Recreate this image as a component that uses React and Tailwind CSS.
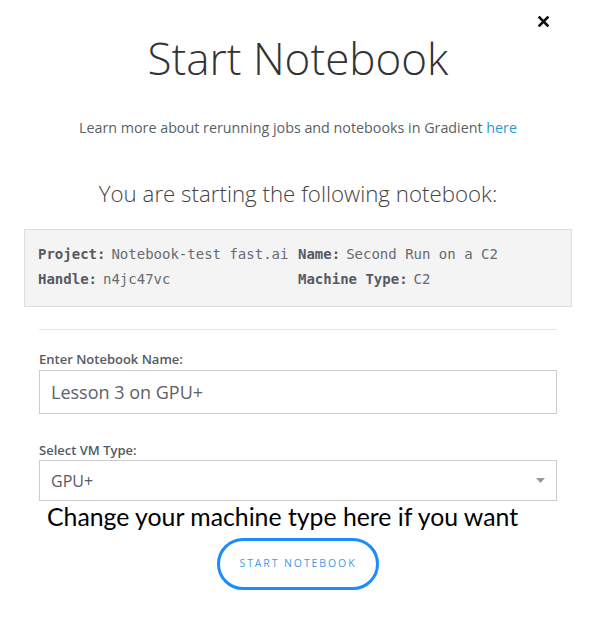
import React from "react";

const mono = { fontFamily: '"DejaVu Sans Mono", "Liberation Mono", monospace' };

function InfoRow({ label, value }) {
  return (
    <div className="h-[25px] flex items-center text-[14px] whitespace-nowrap">
      <span className="font-bold text-[#555a62]">{label}</span>
      <span className="ml-[6px] text-[#666b72]">{value}</span>
    </div>
  );
}

export default function App() {
  return (
    <main
      className="relative w-[596px] h-[629px] bg-white overflow-hidden"
      style={{ fontFamily: '"Open Sans", sans-serif' }}
    >
      {/* close button */}
      <button className="absolute top-[15px] right-[47px] w-[12px] h-[12px] flex items-center justify-center">
        <svg width="11" height="11" viewBox="0 0 11 11">
          <path d="M1.5 1.5 L9.5 9.5 M9.5 1.5 L1.5 9.5" stroke="#111" strokeWidth="2.6" strokeLinecap="square" />
        </svg>
      </button>

      <div className="flex flex-col items-center pt-[36px]">
        <h1 className="text-[44px] leading-[44px] font-light text-[#333]">Start Notebook</h1>

        <p className="mt-[38px] text-[14.3px] leading-[20px] text-[#5a5f66]">
          Learn more about rerunning jobs and notebooks in Gradient{" "}
          <a className="text-[#2a9ad6]">here</a>
        </p>

        <h2 className="mt-[42px] text-[22.3px] leading-[28px] font-light text-[#444]">
          You are starting the following notebook:
        </h2>
      </div>

      {/* notebook info */}
      <div className="mx-[24px] mt-[21px] h-[78px] bg-[#f4f4f4] border border-[#dddddd] px-[13px] pt-[12px]">
        <div className="grid grid-cols-2" style={mono}>
          <InfoRow label="Project:" value="Notebook-test fast.ai" />
          <InfoRow label="Name:" value="Second Run on a C2" />
          <InfoRow label="Handle:" value="n4jc47vc" />
          <InfoRow label="Machine Type:" value="C2" />
        </div>
      </div>

      <div className="mx-[39px] mt-[22px] border-t border-[#e6e6e6]" />

      {/* form */}
      <div className="mx-[39px] mt-[20px] flex flex-col">
        <label className="text-[13px] leading-[18px] font-semibold text-[#555a62]">Enter Notebook Name:</label>
        <div className="mt-[2px] h-[44px] border border-[#cccccc] flex items-center px-[11px] text-[18px] text-[#5d6168]">
          Lesson 3 on GPU+
        </div>

        <label className="mt-[27px] text-[13px] leading-[18px] font-semibold text-[#555a62]">Select VM Type:</label>
        <div className="mt-[1px] h-[41px] border border-[#cccccc] flex items-center justify-between pl-[11px] pr-[11px] text-[16px] text-[#555a62]">
          <span>GPU+</span>
          <svg width="9" height="5" viewBox="0 0 9 5">
            <path d="M0 0 H9 L4.5 5 Z" fill="#9a9a9a" />
          </svg>
        </div>
      </div>

      <p
        className="ml-[47px] mt-[1px] text-[24.8px] leading-[30px] text-black"
        style={{ fontFamily: 'Lato, "Open Sans", sans-serif' }}
      >
        Change your machine type here if you want
      </p>

      <div className="flex justify-center mt-[6px]">
        <button className="w-[162px] h-[52px] rounded-full border-[3px] border-[#1a8cff] text-[10.5px] tracking-[1.9px] text-[#3d9be9]">
          START NOTEBOOK
        </button>
      </div>
    </main>
  );
}
